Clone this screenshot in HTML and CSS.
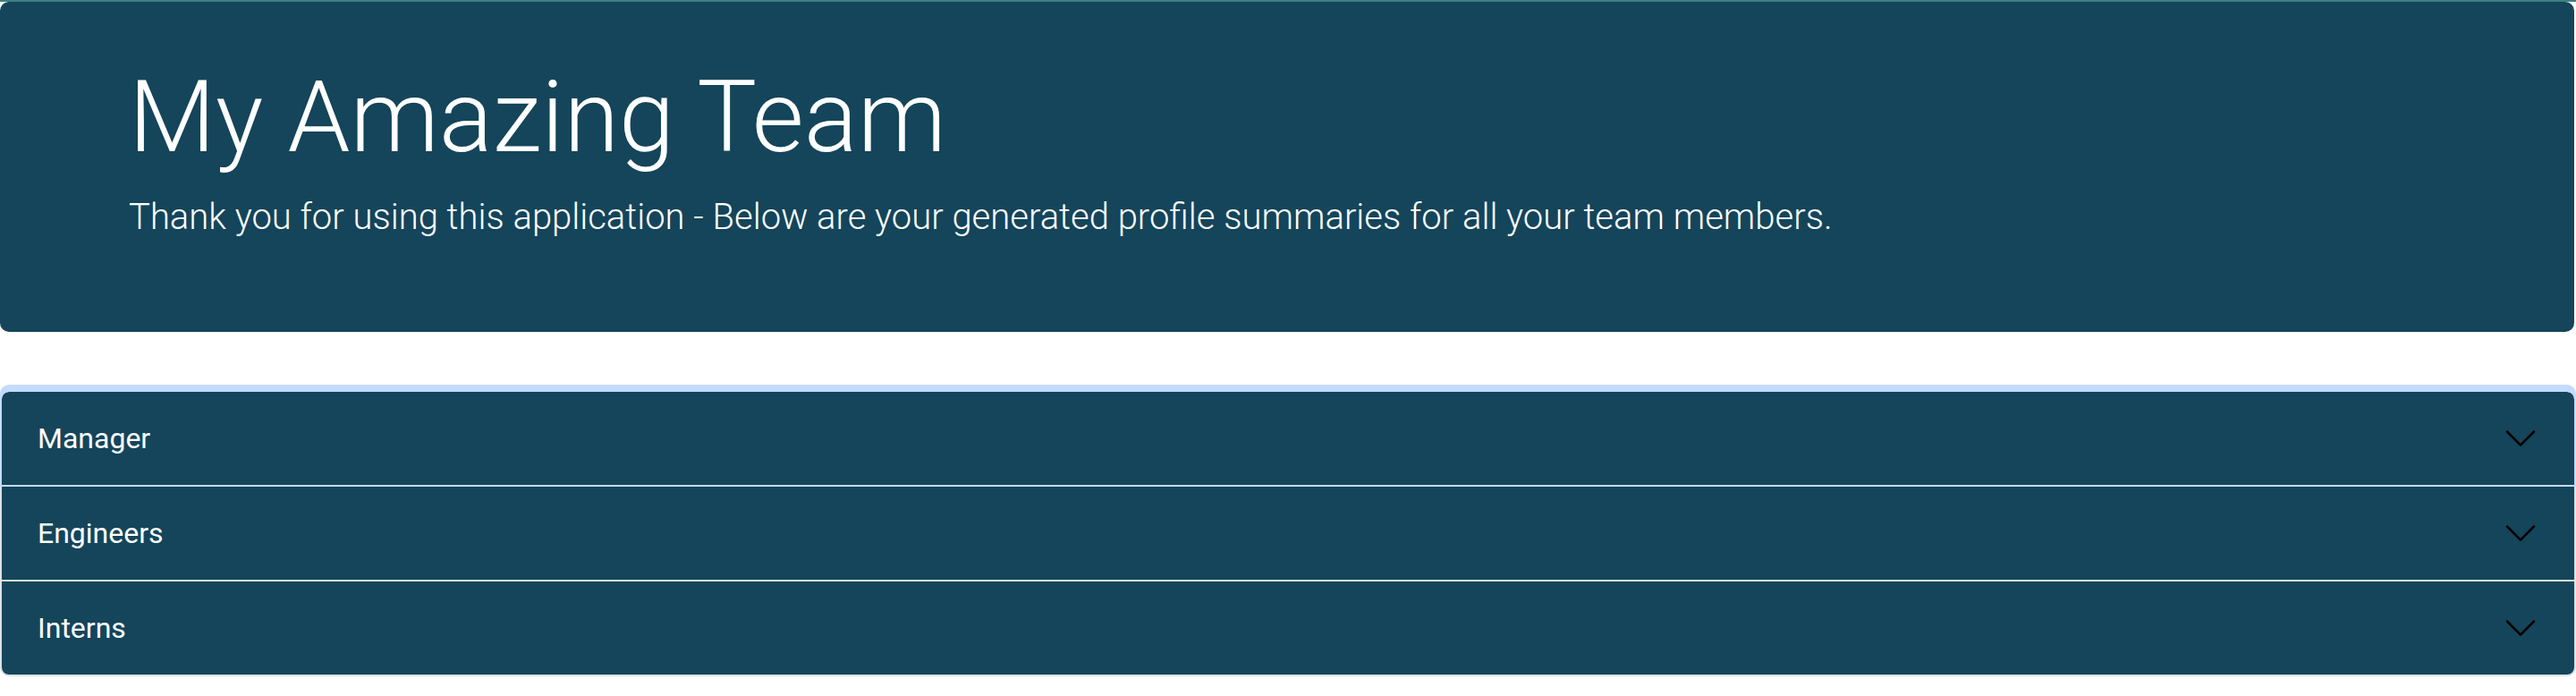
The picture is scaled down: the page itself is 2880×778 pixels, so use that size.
FILE: index.html
```html
<!DOCTYPE html>
<html lang="en">
<head>
<meta charset="utf-8">
<title>My Amazing Team</title>
<link rel="stylesheet" href="styles.css">
</head>
<body>
  <div class="topbar"></div>
  <header class="hero">
    <h1 class="hero-title">My Amazing Team</h1>
    <p class="hero-lead">Thank you for using this application - Below are your generated profile summaries for all your team members.</p>
  </header>
  <section class="accordion">
    <div class="acc-item is-focused">
      <span class="acc-label">Manager</span>
      <svg class="chev" viewBox="0 0 16 16" width="40" height="40"><path d="M1.646 4.646a.5.5 0 0 1 .708 0L8 10.293l5.646-5.647a.5.5 0 0 1 .708.708l-6 6a.5.5 0 0 1-.708 0l-6-6a.5.5 0 0 1 0-.708z"/></svg>
    </div>
    <div class="acc-item">
      <span class="acc-label">Engineers</span>
      <svg class="chev" viewBox="0 0 16 16" width="40" height="40"><path d="M1.646 4.646a.5.5 0 0 1 .708 0L8 10.293l5.646-5.647a.5.5 0 0 1 .708.708l-6 6a.5.5 0 0 1-.708 0l-6-6a.5.5 0 0 1 0-.708z"/></svg>
    </div>
    <div class="acc-item">
      <span class="acc-label">Interns</span>
      <svg class="chev" viewBox="0 0 16 16" width="40" height="40"><path d="M1.646 4.646a.5.5 0 0 1 .708 0L8 10.293l5.646-5.647a.5.5 0 0 1 .708.708l-6 6a.5.5 0 0 1-.708 0l-6-6a.5.5 0 0 1 0-.708z"/></svg>
    </div>
  </section>
</body>
</html>
```

FILE: styles.css
```css
html, body {
  margin: 0;
  padding: 0;
  background: #ffffff;
}

body {
  font-family: Roboto, "Liberation Sans", Arial, sans-serif;
  color: #ffffff;
}

.topbar {
  height: 2px;
  background: #3e8083;
}

.hero {
  margin-right: 2px;
  background: #14455a;
  border-radius: 10px;
  padding: 62px 144px 98px;
}

.hero-title {
  margin: 0 0 15px;
  font-size: 112px;
  font-weight: 300;
  line-height: 1.2;
}

.hero-lead {
  margin: 0;
  font-size: 40px;
  font-weight: 300;
  line-height: 1.5;
}

.accordion {
  margin-top: 65px;
  border: 2px solid #dde1e5;
  border-radius: 10px;
  background: #14455a;
}

.acc-item {
  height: 104px;
  padding: 0 40px;
  display: flex;
  align-items: center;
  justify-content: space-between;
}

.acc-item + .acc-item {
  border-top: 2px solid #dde1e5;
}

.acc-item.is-focused {
  position: relative;
  z-index: 1;
  border-radius: 8px 8px 0 0;
  box-shadow: 0 0 0 2px #c3dbfe, 0 -6px 0 2px #c3dbfe;
}

.acc-label {
  font-size: 32px;
  font-weight: 400;
  line-height: 1.5;
}

.chev {
  fill: #000000;
  display: block;
}
```
